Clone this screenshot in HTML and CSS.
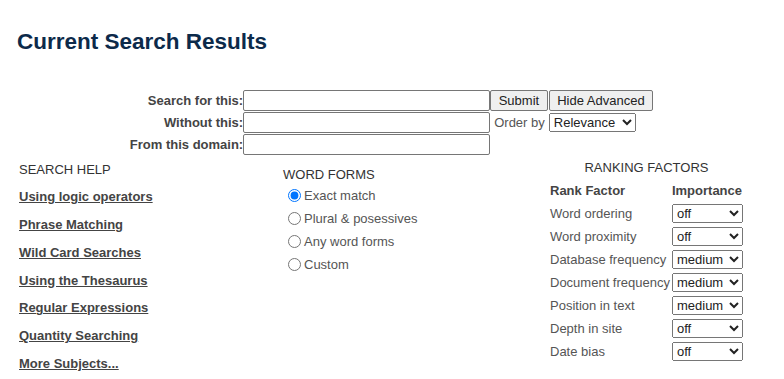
FILE: index.html
```html
<!DOCTYPE html>
<html lang="en">
<head>
<meta charset="utf-8">
<title>Current Search Results</title>
<link rel="stylesheet" href="styles.css">
</head>
<body>
<h1 class="title">Current Search Results</h1>

<form class="search-form">
  <label class="field-label" for="q">Search for this:</label>
  <input class="text-input" id="q" type="text">
  <div class="actions">
    <button type="button" class="btn">Submit</button><button type="button" class="btn">Hide Advanced</button>
  </div>

  <label class="field-label" for="without">Without this:</label>
  <input class="text-input" id="without" type="text">
  <div class="actions">
    <span class="order-label">Order by</span>
    <select class="order-select">
      <option>Relevance</option>
      <option>Date</option>
    </select>
  </div>

  <label class="field-label" for="domain">From this domain:</label>
  <input class="text-input" id="domain" type="text">
  <div class="actions"></div>
</form>

<div class="advanced">
  <div class="help-col">
    <div class="section-heading">SEARCH HELP</div>
    <a class="help-link" href="#">Using logic operators</a>
    <a class="help-link" href="#">Phrase Matching</a>
    <a class="help-link" href="#">Wild Card Searches</a>
    <a class="help-link" href="#">Using the Thesaurus</a>
    <a class="help-link" href="#">Regular Expressions</a>
    <a class="help-link" href="#">Quantity Searching</a>
    <a class="help-link" href="#">More Subjects...</a>
  </div>

  <div class="forms-col">
    <div class="section-heading forms-heading">WORD FORMS</div>
    <label class="radio-row"><input type="radio" name="wf" checked><span>Exact match</span></label>
    <label class="radio-row"><input type="radio" name="wf"><span>Plural &amp; posessives</span></label>
    <label class="radio-row"><input type="radio" name="wf"><span>Any word forms</span></label>
    <label class="radio-row"><input type="radio" name="wf"><span>Custom</span></label>
  </div>

  <div class="rank-col">
    <div class="rank-table">
      <div class="section-heading rank-heading">RANKING FACTORS</div>
      <div class="rank-head">Rank Factor</div>
      <div class="rank-head">Importance</div>

      <div class="rank-name">Word ordering</div>
      <select class="rank-select"><option>off</option><option>low</option><option>medium</option><option>high</option></select>

      <div class="rank-name">Word proximity</div>
      <select class="rank-select"><option>off</option><option>low</option><option>medium</option><option>high</option></select>

      <div class="rank-name">Database frequency</div>
      <select class="rank-select"><option>off</option><option>low</option><option selected>medium</option><option>high</option></select>

      <div class="rank-name">Document frequency</div>
      <select class="rank-select"><option>off</option><option>low</option><option selected>medium</option><option>high</option></select>

      <div class="rank-name">Position in text</div>
      <select class="rank-select"><option>off</option><option>low</option><option selected>medium</option><option>high</option></select>

      <div class="rank-name">Depth in site</div>
      <select class="rank-select"><option>off</option><option>low</option><option>medium</option><option>high</option></select>

      <div class="rank-name">Date bias</div>
      <select class="rank-select"><option>off</option><option>low</option><option>medium</option><option>high</option></select>
    </div>
  </div>
</div>
</body>
</html>
```

FILE: styles.css
```css
html, body {
  margin: 0;
  padding: 0;
  background: #ffffff;
}

body {
  font-family: "Liberation Sans", Arial, sans-serif;
  font-size: 13px;
  line-height: 15px;
  color: #555555;
}

.title {
  margin: 29px 0 0 17px;
  font-size: 22.5px;
  line-height: 25px;
  font-weight: bold;
  color: #0c2a4a;
}

.search-form {
  display: grid;
  grid-template-columns: auto 247px 164px;
  justify-content: center;
  row-gap: 1px;
  margin-top: 36px;
}

.field-label {
  display: flex;
  align-items: center;
  justify-content: flex-end;
  font-weight: bold;
  color: #444444;
  height: 21px;
}

.text-input {
  box-sizing: border-box;
  width: 247px;
  height: 21px;
  margin: 0;
  border: 1px solid #767676;
  border-radius: 2px;
  padding: 1px 2px;
  font: 13px "Liberation Sans", Arial, sans-serif;
}

.actions {
  display: flex;
  align-items: center;
  height: 21px;
  white-space: nowrap;
}

.btn {
  box-sizing: border-box;
  flex-shrink: 0;
  height: 21px;
  margin: 0 1px 0 0;
  padding: 0 7.5px;
  font: 13px "Liberation Sans", Arial, sans-serif;
  white-space: nowrap;
  color: #222222;
  background: #efefef;
  border: 1px solid #767676;
  border-radius: 2px;
}

.order-label {
  margin: 0 4px 0 4px;
  color: #555555;
}

.order-select {
  box-sizing: border-box;
  width: 87px;
  height: 19px;
  margin: 0;
  font: 13px "Liberation Sans", Arial, sans-serif;
  color: #222222;
}

.advanced {
  display: grid;
  grid-template-columns: 264px 267px auto;
  padding-left: 19px;
  margin-top: 4px;
}

.section-heading {
  color: #333333;
}

.help-col {
  display: flex;
  flex-direction: column;
  align-items: flex-start;
  gap: 12.8px;
  padding-top: 2.5px;
}

.help-link {
  font-weight: bold;
  color: #444444;
  text-decoration: underline;
}

.forms-col {
  display: flex;
  flex-direction: column;
  align-items: flex-start;
  padding-top: 7.5px;
}

.forms-heading {
  margin-bottom: 2.5px;
}

.radio-row {
  display: flex;
  align-items: center;
  height: 23px;
  color: #555555;
}

.radio-row input {
  width: 13px;
  height: 13px;
  margin: 0 3px 0 5px;
}

.rank-col {
  padding-top: 1px;
}

.rank-table {
  display: inline-grid;
  grid-template-columns: auto auto;
  column-gap: 2px;
  row-gap: 4px;
  align-items: center;
}

.rank-heading {
  grid-column: 1 / -1;
  text-align: center;
  margin-bottom: 4px;
}

.rank-head {
  font-weight: bold;
  color: #444444;
  margin-bottom: 2px;
}

.rank-name {
  color: #555555;
  white-space: nowrap;
}

.rank-select {
  box-sizing: border-box;
  width: 71px;
  height: 19px;
  margin: 0;
  font: 13px "Liberation Sans", Arial, sans-serif;
  color: #222222;
}
```
